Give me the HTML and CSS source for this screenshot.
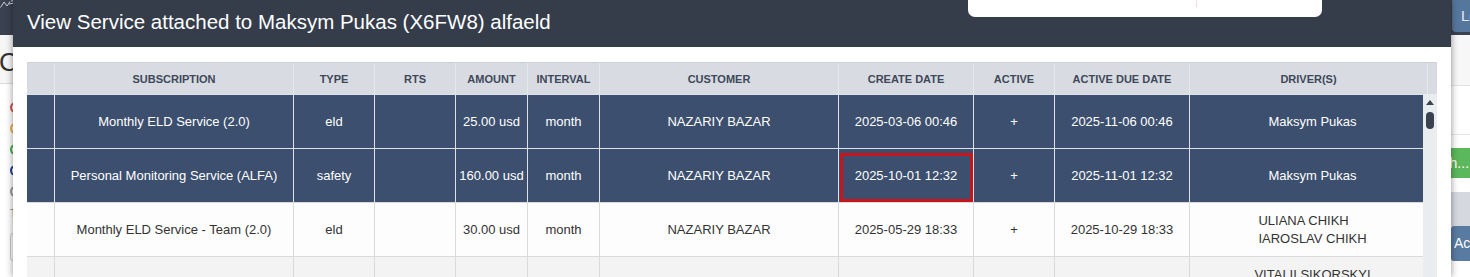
FILE: index.html
```html
<!DOCTYPE html>
<html>
<head>
  <meta charset="utf-8" />
  <title>View Service</title>
  <link rel="stylesheet" href="styles.css">
</head>
<body>
  <div class="app">
    <div class="topbar">
      <svg class="logo" width="16" height="9" viewBox="0 0 16 9">
        <path d="M0.5 7.5 L4 2 L7 6 L10 1.5 M9 4 L14 3 M11 1 L15 0.5" fill="none" stroke="#c9ced6" stroke-width="1"/>
      </svg>
    </div>
    <div class="topbar topbar-right">
      <a class="btn-top" href="#">Logout</a>
    </div>

    <div class="left-pane">
      <div class="pane-title">Customers</div>
      <ul class="status-list">
        <li><span class="ring ring-red"></span></li>
        <li><span class="ring ring-orange"></span></li>
        <li><span class="ring ring-green"></span></li>
        <li><span class="ring ring-blue"></span></li>
        <li><span class="ring ring-gray"></span></li>
      </ul>
      <div class="pane-note">Total</div>
      <div class="pane-input"></div>
    </div>

    <div class="right-pane">
      <div class="rp-head"></div>
      <div class="rp-gap"></div>
      <a class="btn-green" href="#">Search...</a>
      <div class="rp-bar"></div>
      <a class="btn-blue" href="#">Actions</a>
    </div>
  </div>

  <div class="modal">
    <div class="modal-header">
      <h4 class="modal-title">View Service attached to Maksym Pukas (X6FW8) alfaeld</h4>
    </div>
    <div class="modal-body">
      <div class="grid-table">
        <div class="thead">
          <div class="th"></div>
          <div class="th">Subscription</div>
          <div class="th">Type</div>
          <div class="th">RTS</div>
          <div class="th">Amount</div>
          <div class="th">Interval</div>
          <div class="th">Customer</div>
          <div class="th">Create Date</div>
          <div class="th">Active</div>
          <div class="th">Active Due Date</div>
          <div class="th">Driver(s)</div>
          <div class="th"></div>
        </div>
        <div class="tbody-wrap">
          <div class="tbody">
            <div class="tr selected">
              <div class="td"></div>
              <div class="td">Monthly ELD Service (2.0)</div>
              <div class="td">eld</div>
              <div class="td"></div>
              <div class="td">25.00 usd</div>
              <div class="td">month</div>
              <div class="td">NAZARIY BAZAR</div>
              <div class="td">2025-03-06 00:46</div>
              <div class="td">+</div>
              <div class="td">2025-11-06 00:46</div>
              <div class="td drivers"><span class="names">Maksym Pukas</span></div>
            </div>
            <div class="tr selected">
              <div class="td"></div>
              <div class="td">Personal Monitoring Service (ALFA)</div>
              <div class="td">safety</div>
              <div class="td"></div>
              <div class="td">160.00 usd</div>
              <div class="td">month</div>
              <div class="td">NAZARIY BAZAR</div>
              <div class="td marked">2025-10-01 12:32</div>
              <div class="td">+</div>
              <div class="td">2025-11-01 12:32</div>
              <div class="td drivers"><span class="names">Maksym Pukas</span></div>
            </div>
            <div class="tr">
              <div class="td"></div>
              <div class="td">Monthly ELD Service - Team (2.0)</div>
              <div class="td">eld</div>
              <div class="td"></div>
              <div class="td">30.00 usd</div>
              <div class="td">month</div>
              <div class="td">NAZARIY BAZAR</div>
              <div class="td">2025-05-29 18:33</div>
              <div class="td">+</div>
              <div class="td">2025-10-29 18:33</div>
              <div class="td drivers"><span class="names">ULIANA CHIKH<br>IAROSLAV CHIKH</span></div>
            </div>
            <div class="tr alt">
              <div class="td"></div>
              <div class="td">Monthly ELD Service - Team (2.0)</div>
              <div class="td">eld</div>
              <div class="td"></div>
              <div class="td">30.00 usd</div>
              <div class="td">month</div>
              <div class="td">NAZARIY BAZAR</div>
              <div class="td">2025-05-29 18:40</div>
              <div class="td">+</div>
              <div class="td">2025-10-29 18:40</div>
              <div class="td drivers"><span class="names">VITALII SIKORSKYI<br>OLEH SIKORSKYI</span></div>
            </div>
          </div>
          <div class="vscroll">
            <span class="arrow-up"></span>
            <span class="thumb"></span>
          </div>
        </div>
      </div>
    </div>
  </div>

  <div class="notice"><span class="notice-split"></span></div>
</body>
</html>
```

FILE: styles.css
```css
* {
  box-sizing: border-box;
}
html, body {
  margin: 0;
  padding: 0;
}
body {
  position: relative;
  width: 1470px;
  height: 277px;
  overflow: hidden;
  font-family: "Liberation Sans", Arial, sans-serif;
  font-size: 13px;
  color: #333;
  background: #fff;
}

/* page behind the modal */
.app {
  width: 1560px;
  height: 277px;
  display: grid;
  grid-template-columns: 1451px 1fr;
  grid-template-rows: 35px 1fr;
}
.topbar {
  background: #3a4150;
}
.logo {
  display: block;
}
.topbar-right {
  padding-left: 1px;
}
.btn-top {
  display: block;
  width: 90px;
  height: 32px;
  padding-left: 9px;
  background: #56779d;
  border-radius: 0 0 0 4px;
  color: #e3e9f2;
  font-size: 15px;
  line-height: 32px;
  text-decoration: none;
}
.left-pane {
  background: #fff;
}
.pane-title {
  height: 49px;
  padding-top: 15px;
  background: #f6f6f6;
  border-bottom: 1px solid #dcdcdc;
  font-size: 26px;
  line-height: 24px;
  color: #333;
  margin-left: -1px;
}
.status-list {
  list-style-type: none;
  margin: 0;
  padding: 18px 0 0 10px;
}
.status-list li {
  height: 21px;
}
.ring {
  display: block;
  width: 11px;
  height: 11px;
  border-radius: 50%;
  border: 2px solid #999;
}
.ring-red { border-color: #d9534f; }
.ring-orange { border-color: #f0ad4e; }
.ring-green { border-color: #4cae4c; }
.ring-blue { border-color: #2a3f9a; }
.ring-gray { border-color: #9a9a9a; }
.pane-note {
  padding-left: 10px;
  font-size: 11px;
  color: #888;
}
.pane-input {
  width: 200px;
  height: 28px;
  margin: 14px 0 0 10px;
  border: 1px solid #ccc;
  border-radius: 3px;
}
.right-pane {
  background: #fff;
}
.rp-head {
  height: 51px;
  background: #f7f7f7;
  border-bottom: 1px solid #e4e4e4;
}
.rp-gap {
  height: 49px;
  border-bottom: 1px solid #e6e6e6;
}
.btn-green {
  display: block;
  width: 110px;
  height: 30px;
  margin: 13px 0 0 -46px;
  padding-left: 8px;
  background: #5cb85c;
  color: #fff;
  line-height: 30px;
  font-size: 14px;
  text-decoration: none;
}
.rp-bar {
  height: 34px;
  margin-top: 14px;
  background: #d5d9df;
}
.btn-blue {
  display: block;
  width: 90px;
  height: 35px;
  padding-left: 3px;
  background: #5a7ba1;
  border-radius: 3px 0 0 3px;
  color: #fff;
  line-height: 35px;
  font-size: 14px;
  text-decoration: none;
}

/* modal */
.modal {
  position: absolute;
  left: 13px;
  top: 0;
  width: 1438px;
  height: 277px;
  background: #fff;
  box-shadow: 0 0 7px rgba(0, 0, 0, 0.45);
}
.modal-header {
  height: 47px;
  padding: 0 14px 3px;
  display: flex;
  align-items: center;
  background: #353c4a;
}
.modal-title {
  margin: 0;
  font-size: 20.5px;
  font-weight: normal;
  color: #fff;
}
.modal-body {
  padding: 15px 14px 0;
}
.grid-table {
  width: 1410px;
}
.thead {
  display: grid;
  grid-template-columns: 27px 239px 81px 81px 72px 72px 239px 135px 81px 135px 238px 10px;
  height: 32px;
  background: #d8dce2;
  border-top: 1px solid #cdd1d6;
}
.th {
  display: flex;
  align-items: center;
  justify-content: center;
  border-left: 1px solid #e5e7eb;
  font-size: 11px;
  font-weight: bold;
  color: #3e4859;
  text-transform: uppercase;
}
.th:first-child {
  border-left: 0;
}
.tbody-wrap {
  display: flex;
}
.tbody {
  width: 1396px;
}
.tr {
  display: grid;
  grid-template-columns: 27px 239px 81px 81px 72px 72px 239px 135px 81px 135px 234px;
  height: 54px;
  background: #fdfdfd;
  border-top: 1px solid #dadada;
}
.tr.alt {
  background: #f3f3f3;
}
.tr.selected {
  background: #3c4f6e;
  color: #fff;
  border-top-color: #dde2e8;
}
.td {
  display: flex;
  align-items: center;
  justify-content: center;
  text-align: center;
  border-left: 1px solid #dadada;
}
.td:first-child {
  border-left: 0;
}
.selected .td {
  border-left-color: #dde2e8;
}
.td.drivers {
  padding-left: 12px;
}
.names {
  display: inline-block;
  text-align: left;
  line-height: 18px;
}
.td.marked {
  position: relative;
}
.td.marked::after {
  content: "";
  position: absolute;
  left: 1px;
  top: 4px;
  right: 0;
  bottom: 0;
  border: 3px solid #c8141b;
}
.vscroll {
  width: 14px;
  height: 200px;
  display: flex;
  flex-direction: column;
  align-items: center;
  background: #eaedf0;
}
.arrow-up {
  width: 0;
  height: 0;
  margin-top: 6px;
  border-left: 4.5px solid transparent;
  border-right: 4.5px solid transparent;
  border-bottom: 5px solid #3a4150;
}
.thumb {
  width: 8px;
  height: 17px;
  margin-top: 7px;
  border-radius: 4px;
  background: #3a4150;
}

/* top notice */
.notice {
  position: absolute;
  left: 968px;
  top: 0;
  width: 354px;
  height: 17px;
  background: #fff;
  border-radius: 0 0 7px 7px;
}
.notice-split {
  display: block;
  width: 1px;
  height: 7px;
  margin-left: 228px;
  background: #f6dcd2;
}
```
